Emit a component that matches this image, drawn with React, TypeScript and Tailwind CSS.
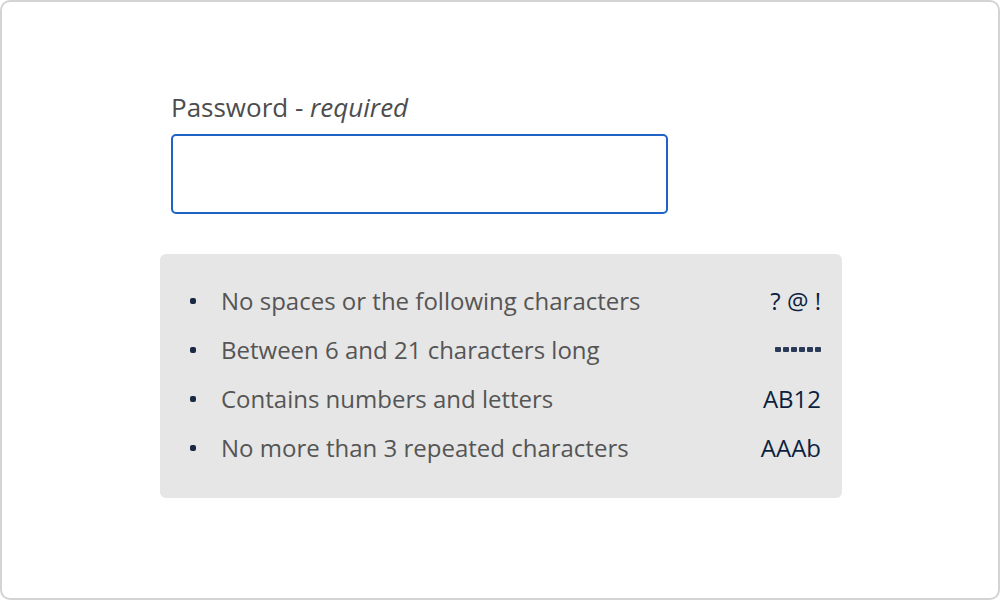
export default function App() {
  const rules = [
    { text: 'No spaces or the following characters', hint: '? @ !' },
    { text: 'Between 6 and 21 characters long', hint: 'dots' },
    { text: 'Contains numbers and letters', hint: 'AB12' },
    { text: 'No more than 3 repeated characters', hint: 'AAAb' },
  ];

  return (
    <div
      className="w-[1000px] h-[600px] bg-white"
      style={{ fontFamily: '"Open Sans", "Noto Sans", sans-serif' }}
    >
      <div className="w-full h-full border-2 border-[#d4d4d4] rounded-[10px] pt-[88px] pl-[158px]">
        {/* Label + input */}
        <div className="ml-[11px]">
          <label className="block text-[26px] leading-[34px] text-[#4d4d4d] mb-[10px]">
            Password - <em className="italic">required</em>
          </label>
          <input
            type="password"
            className="block w-[497px] h-[80px] border-2 border-[#1f63c6] rounded-[5px] bg-white outline-none"
          />
        </div>

        {/* Rules box */}
        <div className="mt-[40px] w-[682px] bg-[#e6e6e6] rounded-[6px] pt-[22px] pb-[26px] pl-[30px] pr-[21px]">
          {rules.map((r) => (
            <div key={r.text} className="flex items-center h-[49px]">
              <span className="w-[6px] h-[6px] rounded-[2px] bg-[#1b2a44] shrink-0" />
              <span className="ml-[25px] flex-1 text-[24px] text-[#555555]">{r.text}</span>
              {r.hint === 'dots' ? (
                <span className="flex gap-[2px] items-center">
                  {[0, 1, 2, 3, 4, 5].map((i) => (
                    <span key={i} className="w-[6px] h-[5px] rounded-[1px] bg-[#2a3a58]" />
                  ))}
                </span>
              ) : (
                <span className="text-[24px] text-[#0c1f3f]">{r.hint}</span>
              )}
            </div>
          ))}
        </div>
      </div>
    </div>
  );
}
